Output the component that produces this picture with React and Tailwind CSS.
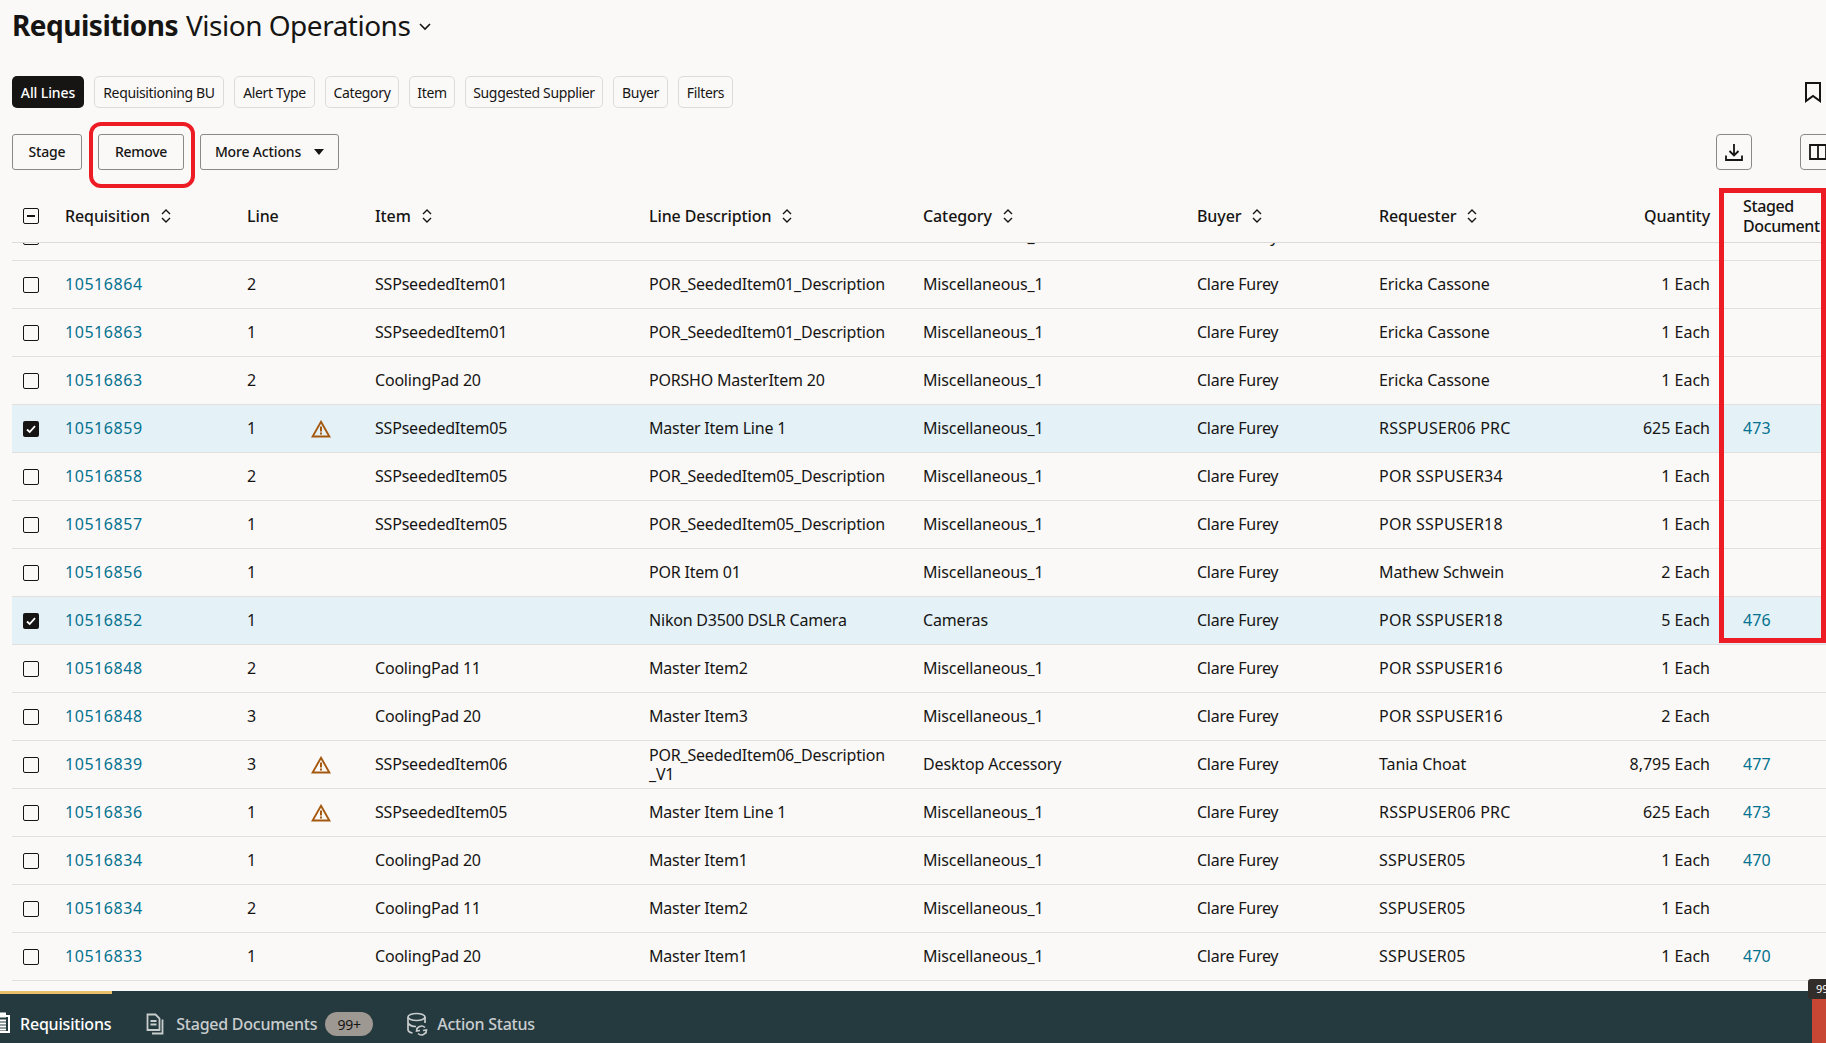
import React from "react";

const rows = [
  ["10516864","2",0,"SSPseededItem01","POR_SeededItem01_Description","Miscellaneous_1","Ericka Cassone","1 Each",""],
  ["10516863","1",0,"SSPseededItem01","POR_SeededItem01_Description","Miscellaneous_1","Ericka Cassone","1 Each",""],
  ["10516863","2",0,"CoolingPad 20","PORSHO MasterItem 20","Miscellaneous_1","Ericka Cassone","1 Each",""],
  ["10516859","1",1,"SSPseededItem05","Master Item Line 1","Miscellaneous_1","RSSPUSER06 PRC","625 Each","473",1],
  ["10516858","2",0,"SSPseededItem05","POR_SeededItem05_Description","Miscellaneous_1","POR SSPUSER34","1 Each",""],
  ["10516857","1",0,"SSPseededItem05","POR_SeededItem05_Description","Miscellaneous_1","POR SSPUSER18","1 Each",""],
  ["10516856","1",0,"","POR Item 01","Miscellaneous_1","Mathew Schwein","2 Each",""],
  ["10516852","1",0,"","Nikon D3500 DSLR Camera","Cameras","POR SSPUSER18","5 Each","476",1],
  ["10516848","2",0,"CoolingPad 11","Master Item2","Miscellaneous_1","POR SSPUSER16","1 Each",""],
  ["10516848","3",0,"CoolingPad 20","Master Item3","Miscellaneous_1","POR SSPUSER16","2 Each",""],
  ["10516839","3",1,"SSPseededItem06","POR_SeededItem06_Description _V1","Desktop Accessory","Tania Choat","8,795 Each","477"],
  ["10516836","1",1,"SSPseededItem05","Master Item Line 1","Miscellaneous_1","RSSPUSER06 PRC","625 Each","473"],
  ["10516834","1",0,"CoolingPad 20","Master Item1","Miscellaneous_1","SSPUSER05","1 Each","470"],
  ["10516834","2",0,"CoolingPad 11","Master Item2","Miscellaneous_1","SSPUSER05","1 Each",""],
  ["10516833","1",0,"CoolingPad 20","Master Item1","Miscellaneous_1","SSPUSER05","1 Each","470"],
];

const cols = "grid grid-cols-[53px_182px_64px_64px_274px_274px_274px_182px_230px_101px_200px] items-center";
const chips = [
  ["Requisitioning BU", "w-[130px]"],
  ["Alert Type", "w-[81px]"],
  ["Category", "w-[74px]"],
  ["Item", "w-[46px]"],
  ["Suggested Supplier", "w-[138px]"],
  ["Buyer", "w-[55px]"],
  ["Filters", "w-[55px]"],
];

function Sort() {
  return (
    <svg width="12" height="16" viewBox="0 0 12 16" fill="none" stroke="#161513" strokeWidth="1.4" className="ml-[10px] shrink-0">
      <path d="M2 6l4-4 4 4M2 10l4 4 4-4" />
    </svg>
  );
}

function Box({ checked, minus }) {
  if (checked)
    return (
      <div className="w-4 h-4 rounded-[2px] bg-[#161513] flex items-center justify-center">
        <svg width="12" height="12" viewBox="0 0 12 12" fill="none" stroke="#fff" strokeWidth="1.8"><path d="M2 6.500l2.700 2.500L10 3.200" /></svg>
      </div>
    );
  return (
    <div className="w-4 h-4 rounded-[2px] border-[1.5px] border-[#161513] flex items-center justify-center">
      {minus && <div className="w-2 h-[2px] bg-[#161513]" />}
    </div>
  );
}

function Warn() {
  return (
    <svg width="20" height="18" viewBox="0 0 20 18" className="block mt-[2px]">
      <path d="M10 1.800L18.400 16.500H1.600Z" fill="none" stroke="#a5590f" strokeWidth="1.900" />
      <path d="M10 6.500v5" stroke="#a5590f" strokeWidth="2" />
      <path d="M10 12.600v2" stroke="#a5590f" strokeWidth="2" />
    </svg>
  );
}

function Row({ r }) {
  const [req, line, warn, item, desc, cat, who, qty, doc, sel] = r;
  const upper = who === who.toUpperCase();
  return (
    <div className={`${cols} h-12 pb-[2px] border-b border-[#e2e0dd] tracking-[-0.2px] ${sel ? "bg-[#e4f1f7]" : ""}`}>
      <div className="pl-[11px] mt-[2px]"><Box checked={sel} /></div>
      <div className="text-[#04718f] tracking-[0.55px]">{req}</div>
      <div>{line}</div>
      <div>{warn ? <Warn /> : null}</div>
      <div>{item}</div>
      <div className="leading-[19px] w-[245px] mt-[2px]">{desc}</div>
      <div className="tracking-[-0.15px]">{cat}</div>
      <div className="tracking-[-0.25px]">Clare Furey</div>
      <div className={upper ? "tracking-[0.2px]" : "tracking-[-0.1px]"}>{who}</div>
      <div className="text-right tracking-normal">{qty}</div>
      <div className="pl-[33px] text-[#04718f] tracking-[0.1px]">{doc}</div>
    </div>
  );
}

function Head({ children, sort, className = "" }) {
  return (
    <div className={`flex items-center font-medium tracking-[-0.1px] ${className}`}>
      {children}
      {sort && <Sort />}
    </div>
  );
}

export default function App() {
  return (
    <div className="relative w-[1826px] h-[1043px] overflow-hidden bg-[#fbf9f8] text-[#161513] text-[16px] flex flex-col font-['Noto_Sans',sans-serif]">
      <div className="h-[76px] pl-3 pt-1 shrink-0 flex items-start">
        <div className="text-[28px] leading-[42px] flex items-center tracking-[-0.5px]">
          <span className="font-bold">Requisitions</span>
          <span className="ml-2">Vision Operations</span>
          <svg width="14" height="14" viewBox="0 0 14 14" fill="none" stroke="#161513" strokeWidth="1.6" className="ml-2 mt-[2px]"><path d="M2 5l5 5 5-5" /></svg>
        </div>
      </div>

      <div className="h-8 pl-3 pr-1 flex items-center gap-[10px] shrink-0 text-[14px] tracking-[-0.35px]">
        <div className="h-8 w-[72px] flex items-center justify-center rounded-[5px] bg-[#161513] text-white font-medium tracking-[-0.1px]">All Lines</div>
        {chips.map(([c, w]) => (
          <div key={c} className={`h-8 ${w} flex items-center justify-center rounded-[5px] border border-[#dedbd7]`}>{c}</div>
        ))}
        <svg width="18" height="22" viewBox="0 0 18 22" fill="none" stroke="#161513" strokeWidth="2" className="ml-auto"><path d="M2 2h14v18l-7-5-7 5z" /></svg>
      </div>

      <div className="h-9 mt-[26px] pl-3 flex items-center shrink-0 text-[14px] font-medium tracking-[-0.15px]">
        <div className="h-9 w-[70px] pb-px flex items-center justify-center rounded-[3px] border border-[#8c8985]">Stage</div>
        <div className="h-9 w-[86px] pb-px ml-4 flex items-center justify-center rounded-[3px] border border-[#8c8985] tracking-[-0.3px]">Remove</div>
        <div className="h-9 w-[139px] pb-px ml-4 flex items-center justify-center gap-[13px] rounded-[3px] border border-[#8c8985]">
          More Actions
          <svg width="10" height="6" viewBox="0 0 10 6" fill="#161513"><path d="M0 0h10L5 6z" /></svg>
        </div>
        <div className="ml-auto flex items-center gap-[48px] -mr-[10px]">
          <div className="w-9 h-9 flex items-center justify-center rounded-[4px] border border-[#8c8985]">
            <svg width="20" height="20" viewBox="0 0 20 20" fill="none" stroke="#161513" strokeWidth="1.8"><path d="M10 2v11M5.500 9l4.500 4.500L14.500 9M2 13.500V18h16v-4.500" /></svg>
          </div>
          <div className="w-9 h-9 flex items-center justify-center rounded-[4px] border border-[#8c8985]">
            <svg width="20" height="20" viewBox="0 0 20 20" fill="none" stroke="#161513" strokeWidth="1.8"><path d="M2 3h16v14H2zM10 3v14" /></svg>
          </div>
        </div>
      </div>

      <div className="ml-3 shrink-0">
        <div className={`${cols} h-[73px] pt-[19px] border-b border-[#dedbd7]`}>
          <div className="pl-[11px]"><Box minus /></div>
          <Head sort>Requisition</Head>
          <Head>Line</Head>
          <div />
          <Head sort>Item</Head>
          <Head sort>Line Description</Head>
          <Head sort>Category</Head>
          <Head sort>Buyer</Head>
          <Head sort>Requester</Head>
          <Head className="justify-end">Quantity</Head>
          <div className="pl-[33px] font-medium leading-5 tracking-[-0.4px]">Staged<br />Document</div>
        </div>
        <div className="h-[748px] overflow-hidden">
          <div className="-mt-[30px]">
            <Row r={["10516866","1",0,"","Master Item1","Miscellaneous_1","Ericka Cassone","1 Each",""]} />
            {rows.map((r, i) => <Row key={i} r={r} />)}
          </div>
        </div>
      </div>

      <div className="relative flex-1 bg-[#253a3f] flex items-center pt-[14px] text-[16px] font-medium tracking-[-0.25px]">
        <div className="absolute left-0 top-0 w-[112px] h-[3px] bg-[#eabf6a]" />
        <div className="relative flex items-center text-white pl-[20px] tracking-[-0.2px]">
          <svg width="20" height="22" viewBox="0 0 20 22" fill="none" stroke="#fff" strokeWidth="2" className="absolute -left-[9px] top-0"><path d="M2 4h16v16H2zM5 8.500h10M5 11.500h10M5 14.500h10M5 17.500h10" /><path d="M6 1.500h8v3H6z" fill="#fff" /></svg>
          Requisitions
        </div>
        <div className="flex items-center ml-[35px] text-[#c9cdce]">
          <svg width="20" height="22" viewBox="0 0 20 22" fill="none" stroke="#c9cdce" strokeWidth="1.800" className="mr-[10px]"><path d="M1.500 1.500h8l4 4v11.500h-12zM4.500 8h6M4.500 11.500h6M16.500 6.500v14H6" /></svg>
          Staged Documents
          <span className="ml-2 w-12 h-6 rounded-full bg-[#9e9892] text-[#161513] text-[14px] font-normal flex items-center justify-center">99+</span>
        </div>
        <div className="flex items-center ml-[33px] text-[#c9cdce]">
          <svg width="22" height="24" viewBox="0 0 22 24" fill="none" stroke="#c9cdce" strokeWidth="1.700" className="mr-[9px]"><ellipse cx="10.500" cy="5" rx="8.500" ry="3.500" /><path d="M2 5v12.500c0 2 2 3 4.500 3.500M19 5v6M2 11c1.500 2.500 5 3.500 8 3.500" /><path d="M10.500 19a5 5 0 0 1 8.500-3.500M11 15.500l-.5 3.500 3.500-.5M20.500 18a5 5 0 0 1-8.500 3.500M20 21.500l.5-3.500-3.500.5" strokeWidth="1.500" /></svg>
          Action Status
        </div>
      </div>

      <div className="absolute left-[89px] top-[122px] w-[106px] h-[66px] rounded-[12px] border-[4px] border-[#ed1c24]" />
      <div className="absolute left-[1719px] top-[188px] w-[107px] h-[455px] border-[5px] border-[#ed1c24]" />
      <div className="absolute left-[1812px] top-[991px] w-[14px] h-[52px] bg-[#c74634]" />
      <div className="absolute left-[1808px] top-[979px] w-[18px] h-[20px] rounded-l-[3px] bg-[#312d2a] text-white text-[11px] leading-[20px] pl-2 overflow-hidden">99</div>
    </div>
  );
}
